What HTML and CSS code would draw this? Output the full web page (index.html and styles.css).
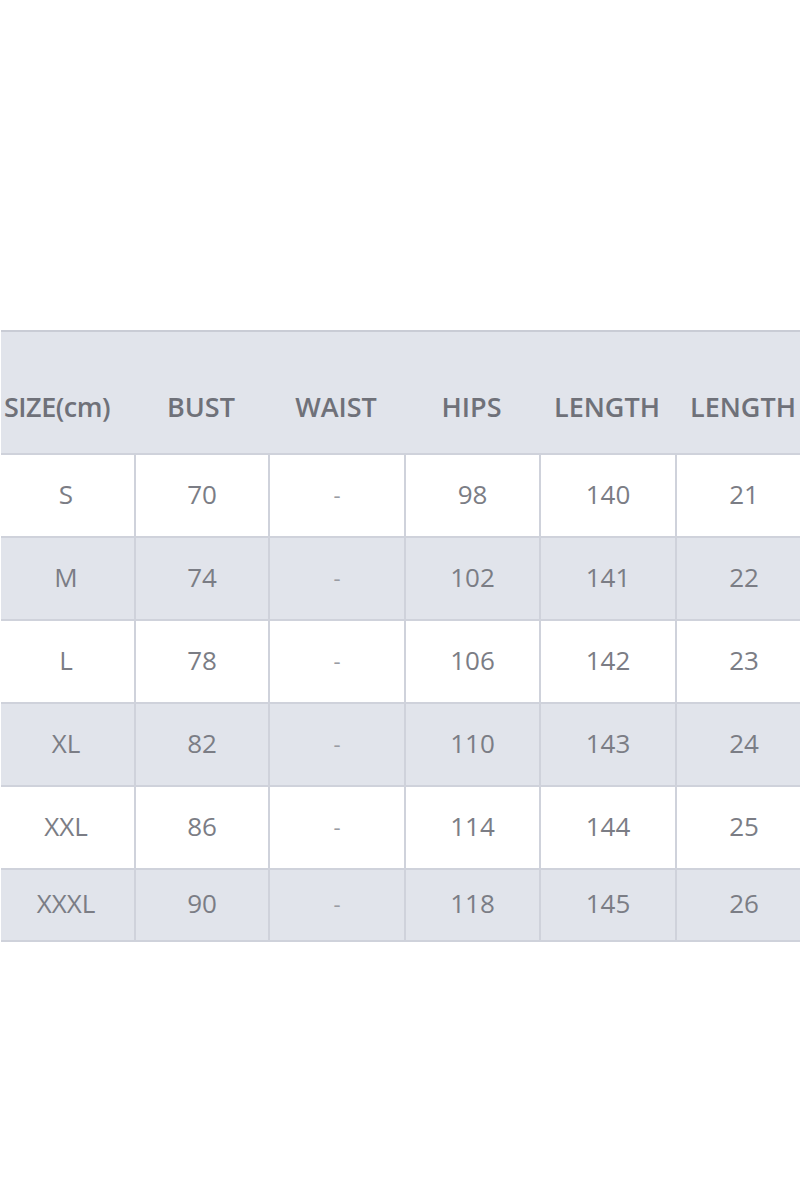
FILE: index.html
```html
<!DOCTYPE html>
<html>
<head>
<meta charset="utf-8">
<link rel="stylesheet" href="styles.css">
</head>
<body>
<div class="page">
  <div class="table">
    <div class="row head">
      <div class="cell first">SIZE(cm)</div>
      <div class="cell">BUST</div>
      <div class="cell">WAIST</div>
      <div class="cell">HIPS</div>
      <div class="cell">LENGTH</div>
      <div class="cell">LENGTH</div>
    </div>
    <div class="row">
      <div class="cell">S</div><div class="cell">70</div><div class="cell dash">-</div><div class="cell">98</div><div class="cell">140</div><div class="cell">21</div>
    </div>
    <div class="row alt">
      <div class="cell">M</div><div class="cell">74</div><div class="cell dash">-</div><div class="cell">102</div><div class="cell">141</div><div class="cell">22</div>
    </div>
    <div class="row">
      <div class="cell">L</div><div class="cell">78</div><div class="cell dash">-</div><div class="cell">106</div><div class="cell">142</div><div class="cell">23</div>
    </div>
    <div class="row alt">
      <div class="cell">XL</div><div class="cell">82</div><div class="cell dash">-</div><div class="cell">110</div><div class="cell">143</div><div class="cell">24</div>
    </div>
    <div class="row">
      <div class="cell">XXL</div><div class="cell">86</div><div class="cell dash">-</div><div class="cell">114</div><div class="cell">144</div><div class="cell">25</div>
    </div>
    <div class="row alt last">
      <div class="cell">XXXL</div><div class="cell">90</div><div class="cell dash">-</div><div class="cell">118</div><div class="cell">145</div><div class="cell">26</div>
    </div>
  </div>
</div>
</body>
</html>
```
FILE: styles.css
```css
html, body {
  margin: 0;
  padding: 0;
  background: #ffffff;
}
body {
  width: 800px;
  height: 1200px;
  overflow: hidden;
  font-family: "Open Sans", "Noto Sans", sans-serif;
}
.page {
  padding-top: 330px;
  padding-left: 1px;
}
.table {
  width: 812px;
  border-bottom: 2px solid #cfd2db;
}
.row {
  display: grid;
  grid-template-columns: 133px 134px 136px 135px 136px 136px;
  height: 83px;
  border-top: 2px solid #cfd2db;
  box-sizing: border-box;
  background: #ffffff;
}
.row.alt {
  background: #e1e4eb;
}
.row.last {
  height: 72px;
}
.cell {
  display: flex;
  align-items: center;
  justify-content: center;
  padding-bottom: 4px;
  font-size: 26px;
  color: #7b7d85;
  border-left: 2px solid #cfd2db;
  box-sizing: border-box;
}
.row .cell:first-child {
  border-left: none;
  padding-right: 3px;
}
.cell.dash {
  color: #9a9ca3;
  font-size: 22px;
}
.row.head {
  height: 123px;
  background: #e1e4eb;
  border-top: 2px solid #c9ccd5;
}
.row.head .cell {
  border-left: none;
  align-items: flex-start;
  padding-top: 56px;
  font-size: 27px;
  font-weight: 600;
  color: #6f7179;
}
.row.head .cell.first {
  justify-content: flex-start;
  padding-left: 3px;
  letter-spacing: -0.5px;
}
```
